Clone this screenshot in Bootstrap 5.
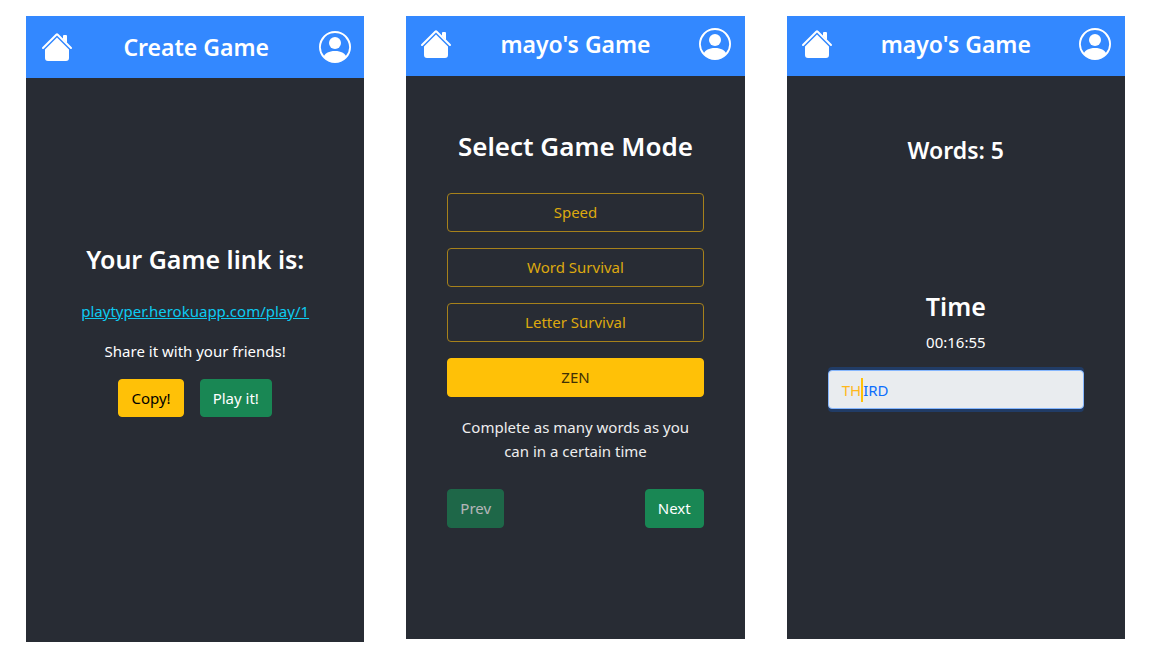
<!DOCTYPE html>
<html lang="en">
<head>
<meta charset="utf-8">
<meta name="viewport" content="width=device-width, initial-scale=1">
<title>Play Typer</title>
<link href="https://cdn.jsdelivr.net/npm/bootstrap@5.3.0/dist/css/bootstrap.min.css" rel="stylesheet">
<style>
  body { font-family: "Noto Sans", "Open Sans", sans-serif; font-size: 15px; line-height: 24px; background: #fff; }
  .board { gap: 42px; padding: 16px 26px; }
  .screen { flex: 1 1 300px; min-height: calc(100vh - 34px); background: #282c34; color: #fff; }
  .screen-tall { min-height: calc(100vh - 31px); }
  .topbar { background: #38f; padding: 12px 14px 16px 14px; }
  .screen-tall .topbar { padding: 15px 13px 15px 15px; }
  .topbar svg { display: block; width: 32px; height: 32px; }
  .topbar h1 { font-size: 23px; line-height: 32px; font-weight: 600; }
  h2 { font-size: 25px; line-height: 32px; font-weight: 600; }
  .screen .words { font-size: 23px; margin-bottom: 124px; }
  .screen .btn { font-size: 15px; line-height: 24px; padding: 6px 12px; border-radius: 4px; }
  .pane { padding-left: 41px; padding-right: 41px; }
  .pane-link { padding-top: 165px; }
  .pane-mode { padding-top: 54px; }
  .pane-mode h2 { font-size: 26px; margin-bottom: 31px; }
  .pane-mode .btn { line-height: 25px; }
  .pane-play { padding-top: 58px; }
  .btn-outline-warning { --bs-btn-color: #dda90f; --bs-btn-border-color: #a6811b; }
  .modes { gap: 16px; margin-bottom: 18px; }
  .modes .btn-warning { --bs-btn-color: #403005; }
  .mode-note { margin-bottom: 26px; color: #eee; }
  .share-link { color: #0dcaf0; }
  .type-box, .type-box:focus { height: 39px; background: #e9ecef; border-color: #86b7fe; border-radius: 4px; box-shadow: 0 3px 0 #213c66, 0 -3px 0 #213c66; }
  .type-word { padding-left: 14px; color: #0d6efd; }
  .typed { color: #ffb81c; border-right: 2px solid #ffc107; }
</style>
</head>
<body>
<svg class="d-none" aria-hidden="true">
  <symbol id="house" viewBox="0 0 16 16">
    <path d="m8 3.293 6 6V13.5a1.5 1.5 0 0 1-1.5 1.5h-9A1.5 1.5 0 0 1 2 13.5V9.293l6-6zm5-.793V6l-2-2V2.5a.5.5 0 0 1 .5-.5h1a.5.5 0 0 1 .5.5z"/>
    <path d="M7.293 1.5a1 1 0 0 1 1.414 0l6.647 6.646a.5.5 0 0 1-.708.708L8 2.207 1.354 8.854a.5.5 0 1 1-.708-.708L7.293 1.5z"/>
  </symbol>
  <symbol id="person" viewBox="0 0 16 16">
    <path d="M11 6a3 3 0 1 1-6 0 3 3 0 0 1 6 0z"/>
    <path fill-rule="evenodd" d="M0 8a8 8 0 1 1 16 0A8 8 0 0 1 0 8zm8-7a7 7 0 0 0-5.468 11.37C3.242 11.226 4.805 10 8 10s4.757 1.225 5.468 2.37A7 7 0 0 0 8 1z"/>
  </symbol>
</svg>
<div class="board d-flex flex-wrap align-items-start">

  <section class="screen screen-tall">
    <header class="topbar d-flex justify-content-between align-items-center">
      <a href="#" class="text-white" aria-label="Home"><svg fill="currentColor"><use href="#house"/></svg></a>
      <h1 class="mb-0">Create Game</h1>
      <a href="#" class="text-white" aria-label="Profile"><svg fill="currentColor"><use href="#person"/></svg></a>
    </header>
    <div class="pane pane-link text-center">
      <h2 class="mb-4">Your Game link is:</h2>
      <p class="mb-3"><a class="share-link" href="#">playtyper.herokuapp.com/play/1</a></p>
      <p class="mb-3">Share it with your friends!</p>
      <div class="d-flex justify-content-center gap-3">
        <button type="button" class="btn btn-warning">Copy!</button>
        <button type="button" class="btn btn-success">Play it!</button>
      </div>
    </div>
  </section>

  <section class="screen">
    <header class="topbar d-flex justify-content-between align-items-center">
      <a href="#" class="text-white" aria-label="Home"><svg fill="currentColor"><use href="#house"/></svg></a>
      <h1 class="mb-0">mayo's Game</h1>
      <a href="#" class="text-white" aria-label="Profile"><svg fill="currentColor"><use href="#person"/></svg></a>
    </header>
    <div class="pane pane-mode text-center">
      <h2>Select Game Mode</h2>
      <div class="modes d-grid">
        <button type="button" class="btn btn-outline-warning">Speed</button>
        <button type="button" class="btn btn-outline-warning">Word Survival</button>
        <button type="button" class="btn btn-outline-warning">Letter Survival</button>
        <button type="button" class="btn btn-warning">ZEN</button>
      </div>
      <p class="mode-note px-2">Complete as many words as you can in a certain time</p>
      <div class="d-flex justify-content-between">
        <button type="button" class="btn btn-success" disabled>Prev</button>
        <button type="button" class="btn btn-success">Next</button>
      </div>
    </div>
  </section>

  <section class="screen">
    <header class="topbar d-flex justify-content-between align-items-center">
      <a href="#" class="text-white" aria-label="Home"><svg fill="currentColor"><use href="#house"/></svg></a>
      <h1 class="mb-0">mayo's Game</h1>
      <a href="#" class="text-white" aria-label="Profile"><svg fill="currentColor"><use href="#person"/></svg></a>
    </header>
    <div class="pane pane-play text-center">
      <h2 class="words">Words: 5</h2>
      <h2 class="mb-2">Time</h2>
      <p class="mb-3">00:16:55</p>
      <div class="position-relative">
        <input type="text" class="type-box form-control" aria-label="Type the word">
        <div class="type-word position-absolute top-0 start-0 h-100 d-flex align-items-center pe-none"><span class="typed">TH</span><span>IRD</span></div>
      </div>
    </div>
  </section>

</div>
<script src="https://cdn.jsdelivr.net/npm/bootstrap@5.3.0/dist/js/bootstrap.bundle.min.js"></script>
</body>
</html>
